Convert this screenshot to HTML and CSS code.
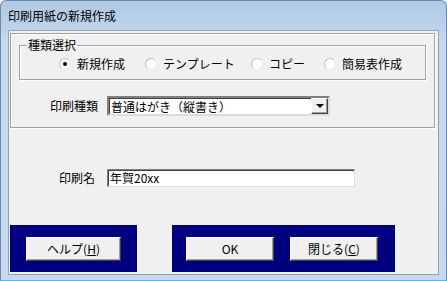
FILE: index.html
```html
<!DOCTYPE html>
<html lang="ja">
  <head>
    <meta charset="UTF-8" />
    <title>印刷用紙の新規作成</title>
    <link rel="stylesheet" href="styles.css">
  </head>
  <body>
    <div class="window">
      <div class="titlebar">印刷用紙の新規作成</div>
      <div class="client">
        <div class="outer-box">
          <fieldset class="group">
            <legend>種類選択</legend>
            <div class="radio-row">
              <label class="radio w1"><span class="dot checked"></span>新規作成</label>
              <label class="radio w2"><span class="dot"></span>テンプレート</label>
              <label class="radio w3"><span class="dot"></span>コピー</label>
              <label class="radio"><span class="dot"></span>簡易表作成</label>
            </div>
          </fieldset>
          <div class="combo-row">
            <span class="field-label">印刷種類</span>
            <div class="combo">
              <span class="combo-text">普通はがき（縦書き）</span>
              <span class="combo-btn"><span class="arrow"></span></span>
            </div>
          </div>
        </div>

        <div class="name-row">
          <span class="field-label">印刷名</span>
          <div class="textbox">年賀20xx</div>
        </div>

        <div class="button-row">
          <div class="panel panel-left">
            <button class="btn btn-help">ヘルプ(<u>H</u>)</button>
          </div>
          <div class="panel panel-right">
            <button class="btn">OK</button>
            <button class="btn">閉じる(<u>C</u>)</button>
          </div>
        </div>
      </div>
    </div>
  </body>
</html>
```

FILE: styles.css
```css
body {
  margin: 0;
  background: #ffffff;
  font-family: "Noto Sans CJK JP", "Noto Sans", sans-serif;
  font-size: 12px;
  color: #000000;
}
.window {
  width: 447px;
  height: 281px;
  box-sizing: border-box;
  background: linear-gradient(#aec8e5, #c4d8ee 40px, #c6d9ee);
  border: 1px solid #6f8aa8;
  border-bottom-color: #5fb6e0;
  border-radius: 6px 6px 0 0;
  padding: 0 7px 5px 7px;
  display: flex;
  flex-direction: column;
}
.titlebar {
  height: 29px;
  line-height: 30px;
  font-size: 12px;
}
.client {
  flex: 1;
  background: #f0f0f0;
  border: 1px solid #8ea4bd;
  display: flex;
  flex-direction: column;
}
.outer-box {
  box-sizing: border-box;
  width: 425px;
  height: 95px;
  margin: 2px 0 0 1px;
  padding: 4px 8px 0 8px;
  border: 1px solid #a0a0a0;
  box-shadow: 1px 1px 0 #ffffff, inset 1px 1px 0 #ffffff;
}
.group {
  margin: 0;
  height: 42px;
  box-sizing: border-box;
  padding: 5px 0 0 7px;
  border: 1px solid #a0a0a0;
  box-shadow: 1px 1px 0 #ffffff, inset 1px 1px 0 #ffffff;
}
.group legend {
  padding: 0 1px;
  line-height: 14px;
}
.radio-row {
  display: flex;
  padding-left: 32px;
  line-height: 14px;
}
.radio {
  display: flex;
  align-items: center;
  gap: 6px;
}
.w1 { width: 86px; }
.w2 { width: 106px; }
.w3 { width: 73px; }
.dot {
  width: 10px;
  height: 10px;
  border-radius: 50%;
  background: #ffffff;
  border: 1px solid #c0c0c0;
  border-right-color: #ececec;
  border-bottom-color: #ececec;
  display: flex;
  align-items: center;
  justify-content: center;
}
.dot.checked::after {
  content: "";
  width: 4px;
  height: 4px;
  border-radius: 50%;
  background: #000000;
}
.combo-row {
  display: flex;
  align-items: center;
  margin: 16px 0 0 31px;
}
.field-label {
  line-height: 14px;
}
.combo-row .field-label {
  width: 57px;
}
.combo {
  box-sizing: border-box;
  width: 223px;
  height: 20px;
  background: #ffffff;
  border: 2px solid #808080;
  border-right-color: #dcdcdc;
  border-bottom-color: #dcdcdc;
  box-shadow: inset 1px 1px 0 #404040;
  display: flex;
  align-items: center;
  justify-content: space-between;
}
.combo-text {
  padding-left: 2px;
  font-size: 12px;
  line-height: 15px;
}
.combo-btn {
  box-sizing: border-box;
  width: 17px;
  height: 16px;
  background: #f0f0f0;
  border: 1px solid #ffffff;
  border-right-color: #404040;
  border-bottom-color: #404040;
  box-shadow: inset -1px -1px 0 #a0a0a0;
  display: flex;
  align-items: center;
  justify-content: center;
}
.arrow {
  width: 0;
  height: 0;
  border-left: 4px solid transparent;
  border-right: 4px solid transparent;
  border-top: 4px solid #000000;
}
.name-row {
  display: flex;
  align-items: center;
  margin: 41px 0 0 50px;
}
.name-row .field-label {
  width: 48px;
}
.textbox {
  box-sizing: border-box;
  width: 248px;
  height: 18px;
  background: #ffffff;
  border: 1px solid #808080;
  border-right-color: #dcdcdc;
  border-bottom-color: #dcdcdc;
  box-shadow: inset 1px 1px 0 #404040;
  padding-left: 2px;
  font-size: 12px;
  line-height: 16px;
}
.button-row {
  display: flex;
  margin: 38px 0 0 1px;
  gap: 35px;
}
.panel {
  box-sizing: border-box;
  height: 47px;
  background: #000080;
  display: flex;
  align-items: center;
}
.panel-left {
  width: 127px;
  padding-left: 16px;
}
.panel-right {
  width: 223px;
  padding-left: 14px;
  gap: 16px;
}
.btn {
  box-sizing: border-box;
  width: 88px;
  height: 24px;
  padding: 0;
  font-family: inherit;
  font-size: 12px;
  color: #000000;
  background: #f0f0f0;
  border: 1px solid #ffffff;
  border-right-color: #404040;
  border-bottom-color: #404040;
  box-shadow: inset -1px -1px 0 #a0a0a0;
}
.btn-help {
  width: 95px;
}
```
